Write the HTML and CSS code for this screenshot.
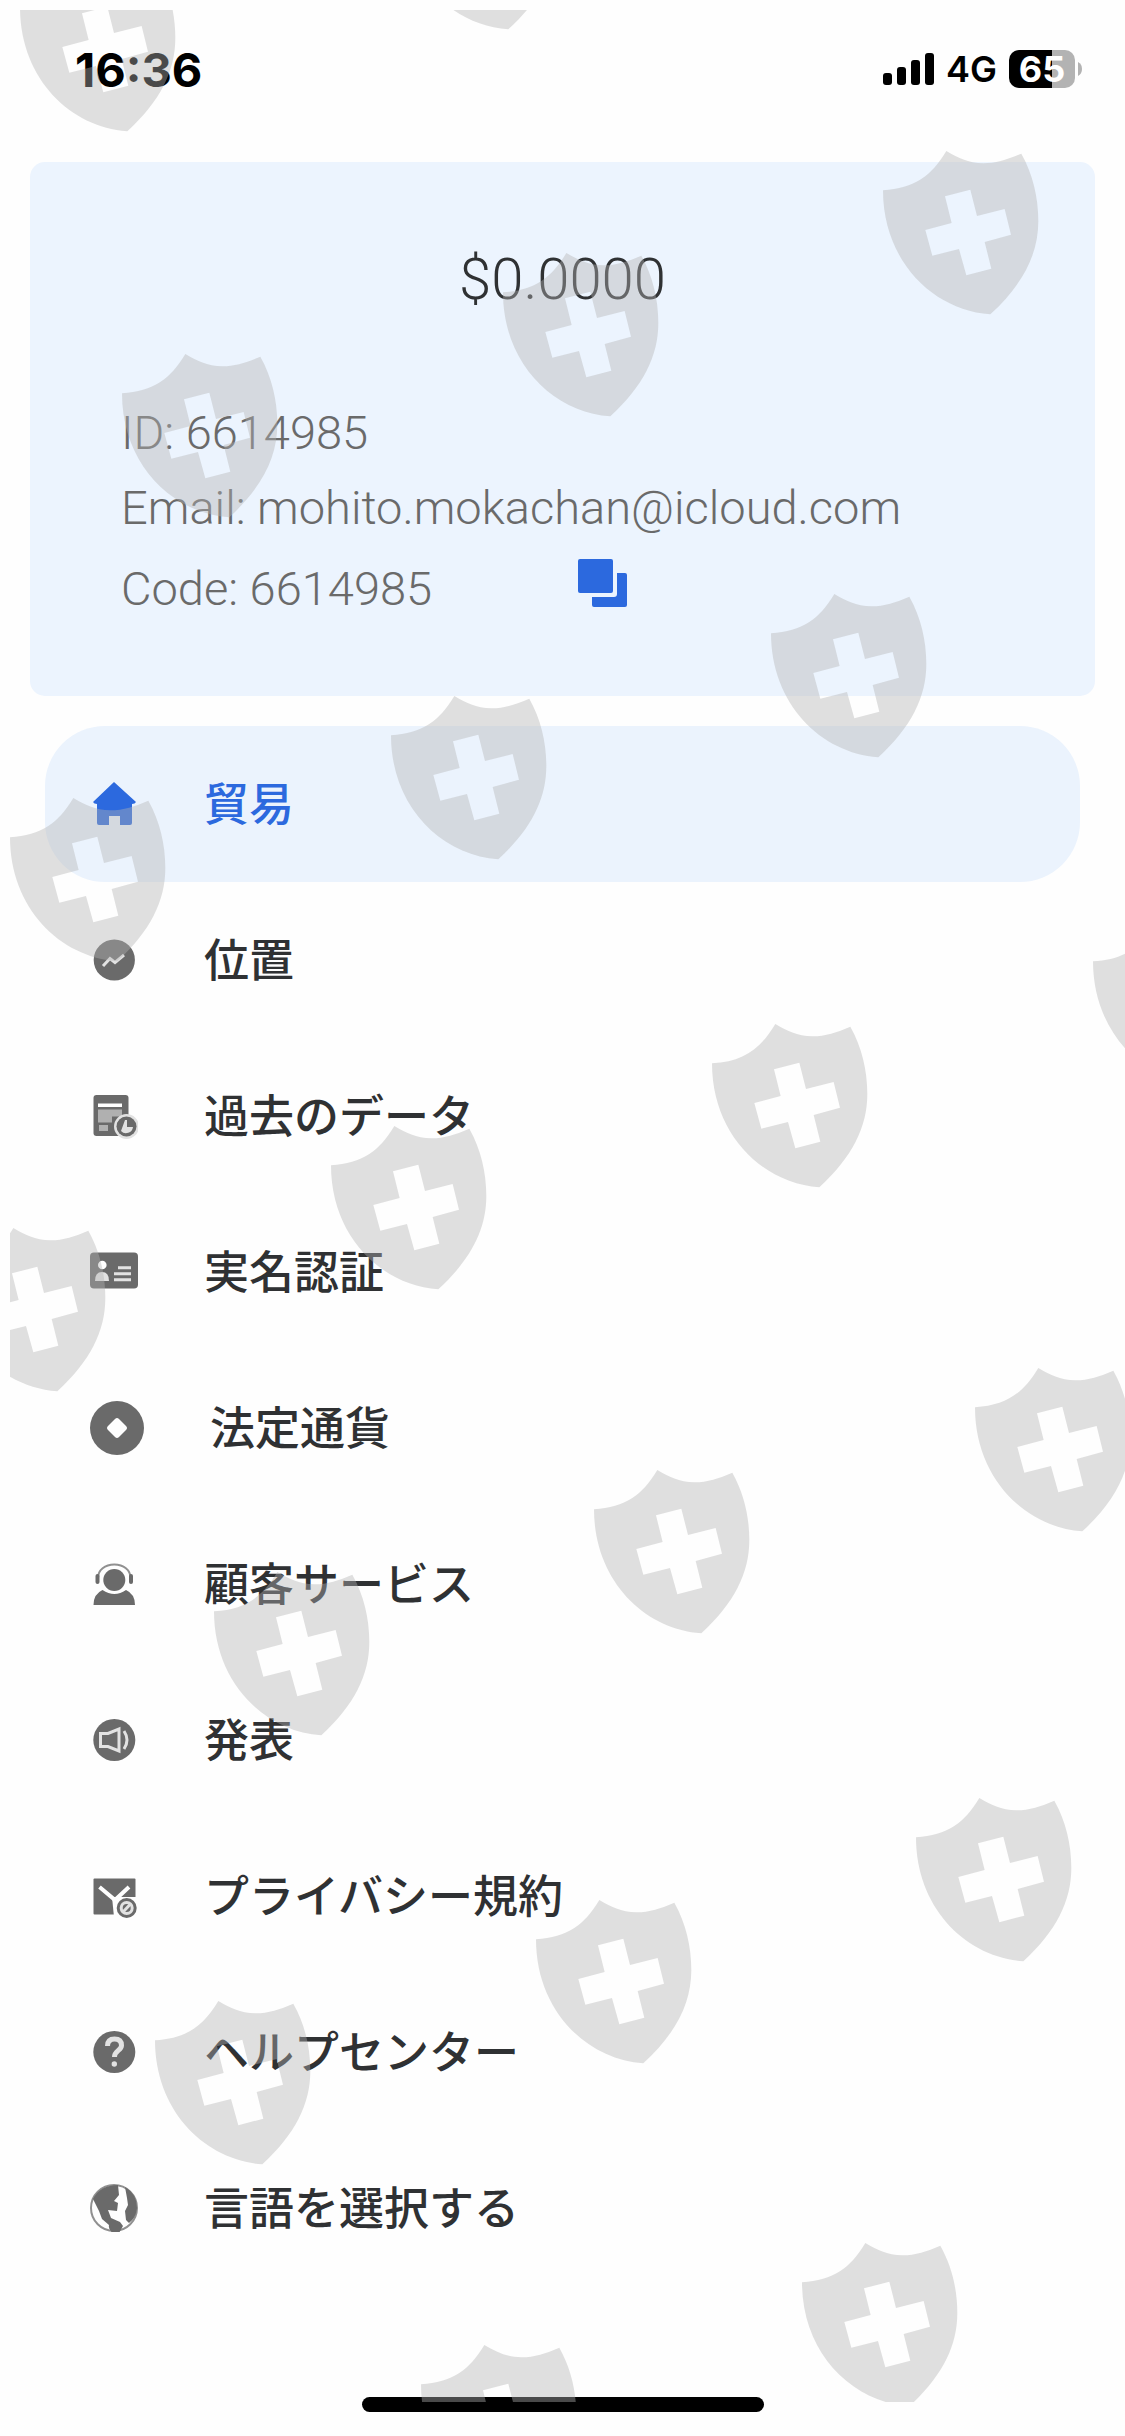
FILE: index.html
```html
<!DOCTYPE html>
<html lang="ja">
<head>
<meta charset="utf-8">
<meta name="viewport" content="width=device-width, initial-scale=1">
<title>メニュー</title>
<link rel="stylesheet" href="styles.css">
</head>
<body>
<div class="screen">
  <header class="status">
    <time class="clock">16:36</time>
    <div class="indicators">
      <svg class="signal" viewBox="0 0 51 32" aria-hidden="true">
        <rect x="0" y="20" width="9" height="12" rx="3"/>
        <rect x="14" y="14" width="9" height="18" rx="3"/>
        <rect x="28" y="7" width="9" height="25" rx="3"/>
        <rect x="42" y="0" width="9" height="32" rx="3"/>
      </svg>
      <span class="network">4G</span>
      <div class="power">
        <span class="battery">65</span>
        <svg class="nub" viewBox="0 0 4 14" aria-hidden="true"><path d="M0 0Q4 2 4 7T0 14Z"/></svg>
      </div>
    </div>
  </header>

  <section class="account">
    <p class="balance">$0.0000</p>
    <p class="detail">ID: 6614985</p>
    <p class="detail">Email: mohito.mokachan@icloud.com</p>
    <div class="code-row">
      <p class="detail code">Code: 6614985</p>
      <button class="copy" type="button" aria-label="コピー">
        <svg viewBox="0 0 49 48" aria-hidden="true">
          <rect width="35" height="34" rx="2"/>
          <path d="M39 14h8q2 0 2 2v30q0 2-2 2H16q-2 0-2-2v-8h22q3 0 3-3z"/>
        </svg>
      </button>
    </div>
  </section>

  <nav class="menu">
    <a class="item active" href="#trade">
      <svg class="icon" viewBox="0 0 48 48" aria-hidden="true"><path d="M24 2 46 22Q45 24 42 24V43q0 2-2 2H30V36H19v9H9q-2 0-2-2V24Q4 24 3 22Z"/></svg>
      <span>貿易</span>
    </a>
    <a class="item" href="#positions">
      <svg class="icon" viewBox="0 0 48 48" aria-hidden="true"><circle cx="24.300" cy="24" r="20.600"/><path class="line" d="M13 30 20 22.500 25 26.500 34 19"/></svg>
      <span>位置</span>
    </a>
    <a class="item" href="#history">
      <svg class="icon" viewBox="0 0 48 48" aria-hidden="true">
        <rect x="3.500" y="3" width="35" height="41" rx="3"/>
        <path class="paper" d="M8 11.500h24v3.500H8z"/>
        <path class="shade" d="M8 17.500h24v7H22v6H8zM9 33h9v6H9z"/>
        <circle class="halo" cx="36.500" cy="34.500" r="11"/><circle cx="36.500" cy="34.500" r="10"/>
        <path class="tint" d="M35 28h2v7h6a7 7 0 0 1-12 4z"/>
      </svg>
      <span>過去のデータ</span>
    </a>
    <a class="item" href="#identity">
      <svg class="icon" viewBox="0 0 48 48" aria-hidden="true">
        <rect y="4.500" width="48" height="36" rx="4"/>
        <circle class="paper" cx="12.300" cy="17" r="4.300"/>
        <path class="tint" d="M5 33q0-9 7-9t7 9z"/>
        <path class="line" d="M28 19.700h13M24 25.700h17M24 31.700h17"/>
      </svg>
      <span>実名認証</span>
    </a>
    <a class="item" href="#fiat">
      <svg class="icon large" viewBox="0 0 54 54" aria-hidden="true"><circle cx="27" cy="27" r="27"/><path class="paper" d="M25 18q2-2 4 0l7 7q2 2 0 4l-7 7q-2 2-4 0l-7-7q-2-2 0-4z"/></svg>
      <span>法定通貨</span>
    </a>
    <a class="item" href="#support">
      <svg class="icon" viewBox="0 0 48 48" aria-hidden="true">
        <path class="band" d="M8 18C8 10 15 4.500 24.300 4.500S40.500 10 40.500 18"/>
        <rect x="5.500" y="14" width="4" height="10" rx="2"/><rect x="39" y="14" width="4" height="10" rx="2"/>
        <circle cx="24.300" cy="20" r="11"/>
        <path d="M3.500 45q0-11 9-15 12 8 23.500 0 9 4 9 15z"/>
      </svg>
      <span>顧客サービス</span>
    </a>
    <a class="item" href="#news">
      <svg class="icon" viewBox="0 0 48 48" aria-hidden="true">
        <circle cx="24.300" cy="24" r="21"/>
        <path class="line" d="M10.500 17.500H18L29 13V35L18 30.500H10.500ZM34 15Q40 24 34 33"/>
      </svg>
      <span>発表</span>
    </a>
    <a class="item" href="#privacy">
      <svg class="icon" viewBox="0 0 48 48" aria-hidden="true">
        <rect x="3.500" y="6.500" width="42" height="36" rx="1"/>
        <path class="paper" d="M22 25h26v20H24z"/>
        <path class="fold" d="M9.500 15 25 28 39 15"/>
        <circle cx="36.700" cy="36" r="10"/>
        <circle class="line" cx="36.700" cy="36" r="5.500"/><path class="line" d="m33 40 7.500-8"/>
      </svg>
      <span>プライバシー規約</span>
    </a>
    <a class="item" href="#help">
      <svg class="icon" viewBox="0 0 48 48" aria-hidden="true">
        <circle cx="24.300" cy="24" r="21"/>
        <path class="hook" d="M17.500 18q0-7 7-7t7 6.500c0 5-7 5-7 11.500"/><circle class="tint" cx="24.300" cy="36" r="2.700"/>
      </svg>
      <span>ヘルプセンター</span>
    </a>
    <a class="item" href="#language">
      <svg class="icon" viewBox="0 0 48 48" aria-hidden="true">
        <circle class="band" cx="24" cy="24" r="23"/>
        <path d="M3 15Q10 1 28 1l1 10-5 6 4 2-1 8-9-1 3 8 9 4 3 4-4 7h-6q-5-3-4-8l-7-6-3-8-2-4zM35 3q12 7 12 21-1 10-8 15l-3-3-1-9 3-6-1-7z"/>
      </svg>
      <span>言語を選択する</span>
    </a>
  </nav>

  <div class="home-bar"></div>

  <svg class="watermark" aria-hidden="true">
    <defs>
      <path id="shield" transform="scale(.3333)" fill-rule="evenodd" d="M0 118C95 112 145 75 190 0C225 20 255 36 301 37C340 37 375 25 415 8C450 70 466 140 466 210C466 310 420 400 322 490C150 478 0 330 0 118ZM186 136 262 116 282 195 365 174 384 251 305 273 325 353 250 373 228 294 148 314 127 237 206 216Z"/>
    </defs>
    <use href="#shield" x="10" y="-42"/><use href="#shield" x="391" y="-144"/>
    <use href="#shield" x="873" y="141"/><use href="#shield" x="493" y="243"/><use href="#shield" x="112" y="344"/>
    <use href="#shield" x="761" y="584"/><use href="#shield" x="381" y="686"/><use href="#shield" x="0" y="788"/>
    <use href="#shield" x="1083" y="912"/><use href="#shield" x="702" y="1014"/><use href="#shield" x="321" y="1116"/><use href="#shield" x="-60" y="1218"/>
    <use href="#shield" x="965" y="1358"/><use href="#shield" x="584" y="1460"/><use href="#shield" x="204" y="1562"/>
    <use href="#shield" x="906" y="1788"/><use href="#shield" x="526" y="1890"/><use href="#shield" x="145" y="1991"/>
    <use href="#shield" x="792" y="2233"/><use href="#shield" x="411" y="2335"/>
  </svg>
</div>
</body>
</html>
```
FILE: styles.css
```css
* {
  box-sizing: border-box;
}

body {
  margin: 0;
  background: #fefefe;
  color: #2f3133;
  font-family: Inter, "Liberation Sans", "Noto Sans CJK JP", sans-serif;
}

p {
  margin: 0;
}

.screen {
  position: relative;
  display: flex;
  flex-direction: column;
  min-height: 100vh;
  padding-bottom: 24px;
}

.status {
  display: flex;
  align-items: center;
  justify-content: space-between;
  height: 138px;
  padding: 0 43px 0 75px;
  color: #000;
}

.clock {
  font-size: 47px;
  font-weight: 700;
}

.indicators,
.power {
  display: flex;
  align-items: center;
}

.indicators {
  gap: 12px;
}

.signal {
  width: 51px;
  height: 32px;
}

.network {
  font-size: 36px;
  font-weight: 600;
}

.power {
  gap: 3px;
}

.battery {
  width: 66px;
  border-radius: 10px;
  background: linear-gradient(90deg, #000 65%, #b3b3b3 65%);
  color: #fff;
  font-size: 36px;
  font-weight: 700;
  line-height: 38px;
  text-align: center;
}

.nub {
  width: 4px;
  height: 14px;
  fill: #b3b3b3;
}

.account {
  margin: 24px 30px 30px;
  padding: 81px 91px 64px;
  border-radius: 15px;
  background: #ecf4fe;
  font-family: Roboto, "Liberation Sans", sans-serif;
}

.balance {
  margin-bottom: 80px;
  font-size: 58px;
  font-weight: 300;
  line-height: 72px;
  text-align: center;
}

.detail {
  color: #6a6a6a;
  font-size: 47px;
  font-weight: 300;
  line-height: 75px;
}

.code-row {
  display: flex;
  align-items: center;
  height: 87px;
}

.code {
  flex: 0 0 457px;
}

.copy {
  width: 49px;
  height: 48px;
  margin-bottom: 12px;
  padding: 0;
  border: 0;
  background: none;
}

.copy svg {
  display: block;
  fill: #2c69de;
}

.menu {
  display: flex;
  flex-direction: column;
  margin: 0 45px;
  font-family: "Noto Sans CJK JP", sans-serif;
}

.item {
  display: flex;
  align-items: center;
  gap: 66px;
  height: 156px;
  padding: 0 45px;
  border-radius: 60px;
  color: #2f3133;
  font-size: 45px;
  font-weight: 500;
  line-height: 60px;
  text-decoration: none;
}

.item span {
  padding-bottom: 5px;
}

.active {
  background: #ebf3fd;
  color: #2c69de;
}

.icon {
  flex: none;
  width: 48px;
  height: 48px;
  fill: #6a6a6a;
}

.active .icon {
  fill: #2c69de;
}

.large {
  width: 54px;
  height: 54px;
}

.icon .paper {
  fill: #fefefe;
}

.icon .tint {
  fill: #e2e2e2;
}

.icon .shade {
  fill: #b0b0b0;
}

.icon .line,
.icon .fold,
.icon .hook,
.icon .band,
.icon .halo {
  fill: none;
  stroke: #e2e2e2;
  stroke-width: 3;
}

.icon .fold {
  stroke: #fefefe;
  stroke-width: 4;
}

.icon .hook {
  stroke-width: 5;
}

.icon .band {
  stroke: #909090;
  stroke-width: 2;
}

.home-bar {
  width: 402px;
  height: 15px;
  margin: auto auto 0;
  border-radius: 8px;
  background: #000;
}

.watermark {
  position: absolute;
  top: 10px;
  left: 10px;
  width: calc(100% - 10px);
  height: calc(100% - 44px);
  overflow: hidden;
  fill: rgba(180, 180, 180, 0.41);
  pointer-events: none;
}
```
